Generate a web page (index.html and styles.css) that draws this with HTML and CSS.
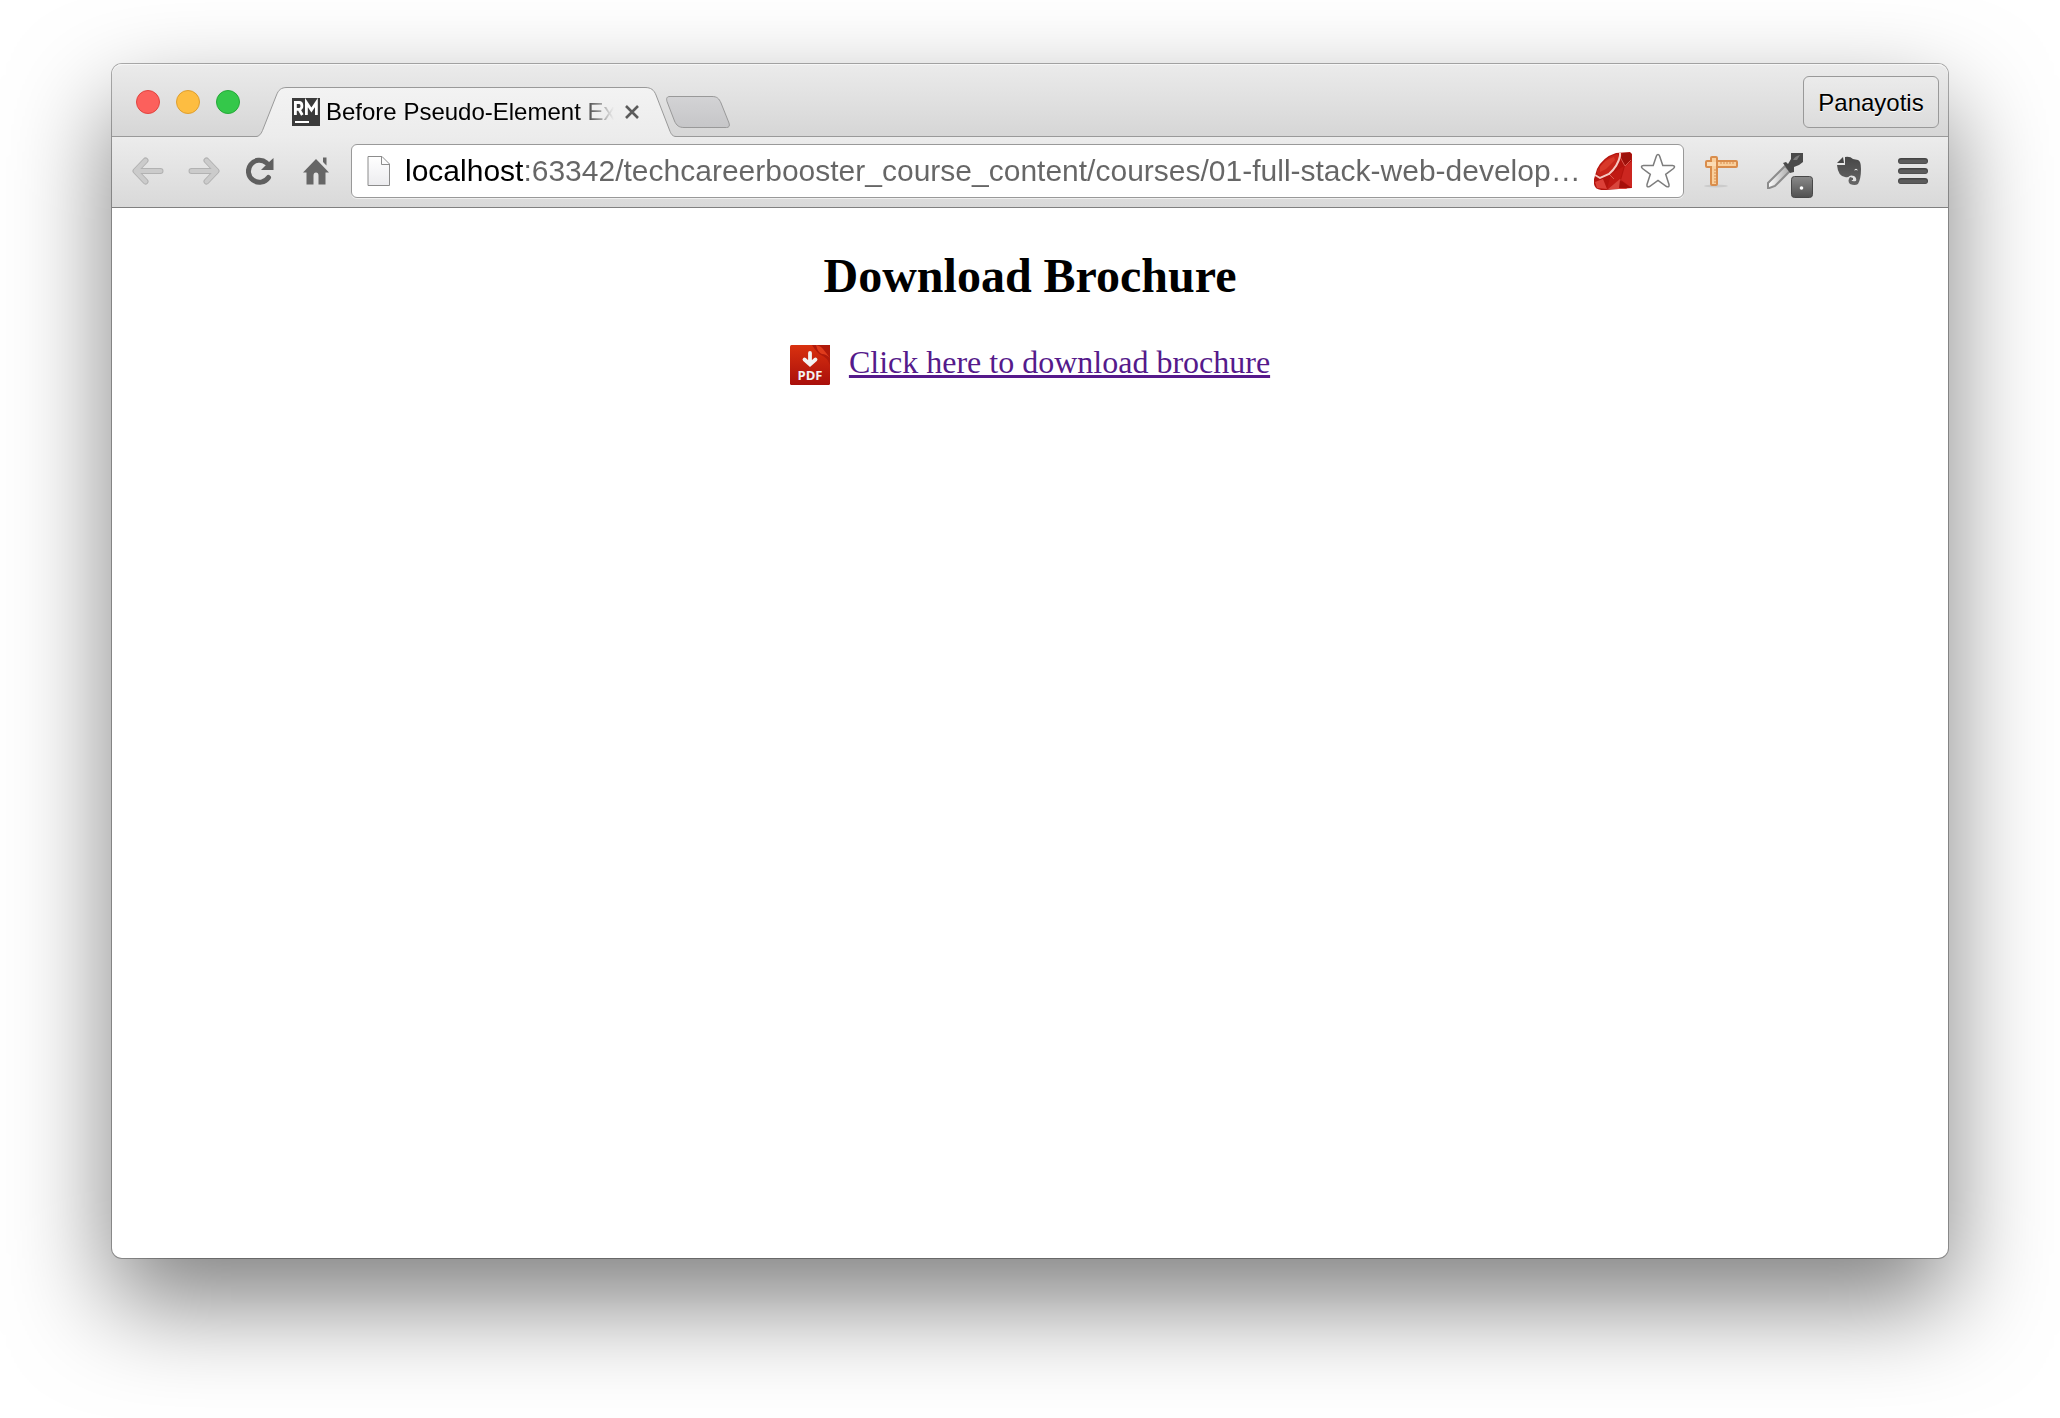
FILE: index.html
```html
<!DOCTYPE html>
<html lang="en">
<head>
<meta charset="utf-8">
<title>Before Pseudo-Element Example</title>
<link rel="stylesheet" href="styles.css">
</head>
<body>
<div class="window">
  <header class="tabstrip">
    <div class="lights">
      <button class="light light-close" aria-label="Close window"></button>
      <button class="light light-min" aria-label="Minimize window"></button>
      <button class="light light-zoom" aria-label="Zoom window"></button>
    </div>
    <div class="tab">
      <svg class="tab-shape" viewBox="0 0 420 51" aria-hidden="true">
        <defs><linearGradient id="tabFill" x1="0" y1="0" x2="0" y2="1"><stop offset="0" stop-color="#f3f3f3"/><stop offset="1" stop-color="#ececec"/></linearGradient></defs>
        <path d="M0 49.500C3 49.500 5 47 6.500 43.500L20.500 8C22.500 3 25 .5 31 .5H389C395 .5 398 3 400 8L413.500 43C415 47 416.500 49.500 420 49.500V51H0Z" fill="url(#tabFill)"/>
        <path d="M0 49.500C3 49.500 5 47 6.500 43.500L20.500 8C22.500 3 25 .5 31 .5H389C395 .5 398 3 400 8L413.500 43C415 47 416.500 49.500 420 49.500" fill="none" stroke="#999"/>
      </svg>
      <svg class="favicon" viewBox="0 0 28 28" aria-hidden="true">
        <rect width="28" height="28" fill="#3b3b3b"/>
        <path d="M3.400 17V4.500H7.200C10.800 4.500 10.800 11.300 7.200 11.300H3.500M7 11.300L10.300 17M14.400 17V4.500L19.400 12L24.400 4.500V17" fill="none" stroke="#fff" stroke-width="2.800"/>
        <rect x="3" y="23" width="14" height="2" fill="#fff"/>
      </svg>
      <span class="tab-title">Before Pseudo-Element Example</span>
      <button class="tab-close" aria-label="Close tab">
        <svg width="14" height="14" viewBox="0 0 14 14"><path d="M1 1L13 13M13 1L1 13" stroke="#5b5b5b" stroke-width="2.600"/></svg>
      </button>
    </div>
    <button class="new-tab" aria-label="New tab">
      <svg width="66" height="34" viewBox="0 0 66 34">
        <defs><linearGradient id="newFill" x1="0" y1="0" x2="0" y2="1"><stop offset="0" stop-color="#d3d3d5"/><stop offset="1" stop-color="#c6c6c8"/></linearGradient></defs>
        <path d="M5 1.500H47C52 1.500 54 3.500 56 8L64 28C65 31 64 32.500 61.500 32.500H19C14 32.500 11.500 30.500 9.500 26L2 6.500C1 3 2 1.500 5 1.500Z" fill="url(#newFill)" stroke="#999"/>
      </svg>
    </button>
    <button class="profile">Panayotis</button>
  </header>

  <nav class="toolbar" aria-label="Navigation">
    <button class="nav-btn" aria-label="Back">
      <svg width="32" height="28" viewBox="0 0 32 28"><g fill="none" stroke-linecap="round" stroke-linejoin="round"><path d="M13.500 3.500L3.500 14L13.500 24.500M4 14H28.500" stroke="#b2b2b2" stroke-width="6"/><path d="M13.500 3.500L3.500 14L13.500 24.500M4 14H28.500" stroke="#cbcbcb" stroke-width="4"/></g></svg>
    </button>
    <button class="nav-btn" aria-label="Forward">
      <svg width="32" height="28" viewBox="0 0 32 28"><g fill="none" stroke-linecap="round" stroke-linejoin="round"><path d="M18.500 3.500L28.500 14L18.500 24.500M28 14H3.500" stroke="#b2b2b2" stroke-width="6"/><path d="M18.500 3.500L28.500 14L18.500 24.500M28 14H3.500" stroke="#cbcbcb" stroke-width="4"/></g></svg>
    </button>
    <button class="nav-btn" aria-label="Reload">
      <svg width="28" height="28" viewBox="0 0 28 28"><path d="M22.500 20.500A11 11 0 1 1 20.500 5.800" fill="none" stroke="#5f5f5f" stroke-width="5" stroke-linecap="round"/><path d="M27.500 1V13H15L19.500 8.500L22.500 5.500Z" fill="#5f5f5f"/></svg>
    </button>
    <button class="nav-btn" aria-label="Home">
      <svg width="26" height="28" viewBox="0 0 26 28"><path d="M13 2L26 15.500H22.500V27.500H15.500V18.500Q15.500 15.500 13 15.500T10.500 18.500V27.500H3.500V15.500H0ZM20 .5H23.500V8.500L20 5Z" fill="#666"/></svg>
    </button>
    <div class="omnibox">
      <svg class="page-icon" width="24" height="32" viewBox="0 0 24 32" aria-hidden="true">
        <defs><linearGradient id="pageFill" x1="0" y1="0" x2="0" y2="1"><stop offset="0" stop-color="#fff"/><stop offset="1" stop-color="#ececef"/></linearGradient></defs>
        <path d="M1 1.500H15L22.500 9V30.500H1Z" fill="url(#pageFill)" stroke="#8c8c8c"/><path d="M14.500 1.500V9.500H22.500" fill="none" stroke="#8c8c8c"/>
      </svg>
      <input class="url" type="text" aria-label="Address" value="localhost:63342/techcareerbooster_course_content/courses/01-full-stack-web-develop…">
      <svg class="ruby" width="38" height="38" viewBox="0 0 38 38" aria-hidden="true">
        <path d="M0 27L3 17Q9 5 22 1L36 0L38 2V36L12 38Q1 39 0 32Z" fill="#b3140e"/>
        <path d="M3 19Q10 5 23 2L26 4Q23 13 15 21L7 24Q2 23 3 19Z" fill="#c9251a"/>
        <path d="M6 15Q12 7 20 5L21 8L12 17L6 20Z" fill="#d8392a"/>
        <path d="M29 1H37V9L31 14L27 6Z" fill="#9d110b"/>
        <path d="M31 14L38 9V36L27 28Z" fill="#cc2620"/>
        <path d="M17 22L30 14L26 28L13 37Z" fill="#c01913"/>
        <path d="M14 37L26 27L33 37Z" fill="#d9453c"/>
        <path d="M26 28L37 36H25Z" fill="#a60f0a"/>
        <path d="M1 30L9 27L13 37L3 36Z" fill="#dc4038"/>
        <path d="M26 5L31 14L37 8M15 22L20 27" fill="none" stroke="#d9584e"/>
        <path d="M1 23L6 26L15 22Q24 14 26 4V1" fill="none" stroke="#f7c9c2" stroke-width="2"/>
      </svg>
      <button class="star" aria-label="Bookmark this page">
        <svg width="36" height="36" viewBox="0 0 36 36"><path d="M18 1.500Q19 1.500 19.600 3L22.800 12.500H32.500Q36 13 33.500 15.500L25.700 21.300L29 31.500Q29.500 34.800 26.500 33.500L18 27.500L9.500 33.500Q6.500 34.800 7 31.500L10.300 21.300L2.500 15.500Q0 13 3.500 12.500H13.200L16.400 3Q17 1.500 18 1.500Z" fill="#fff" stroke="#7d7d7d" stroke-width="1.500"/></svg>
      </button>
    </div>
    <div class="extensions">
      <button class="ext-btn" aria-label="Page ruler">
        <svg width="34" height="34" viewBox="0 0 34 34"><ellipse cx="12" cy="32" rx="12" ry="1.500" fill="#cbcbcb"/><rect x="2" y="7" width="31" height="6" rx="1" fill="#f9cf9c" stroke="#d98d4c" stroke-width="2"/><rect x="7" y="3" width="6" height="28" rx="1" fill="#f9cf9c" stroke="#d98d4c" stroke-width="2"/><path d="M17 7V10M20 7V10M23 7V10M26 7V10M29 7V10M10 16H13M10 19H13M10 22H13M10 25H13M10 28H13" stroke="#d98d4c"/><path d="M3 8H12V12H3Z" fill="#fbdcb5"/></svg>
      </button>
      <button class="ext-btn" aria-label="Color picker">
        <svg width="36" height="36" viewBox="0 0 36 36"><defs><linearGradient id="glass"><stop offset="0" stop-color="#fff"/><stop offset="1" stop-color="#a8a8a8"/></linearGradient></defs><path d="M1 30L18 13L23 18L8 33L1 35.500Z" fill="url(#glass)" stroke="#8c8c8c" stroke-width="2"/><path d="M16 10L19 9L21 11L24 6V0H36V9L32 12L27 14V19L23 20Z" fill="#4a4a4a"/><path d="M26 7Q28 3 33 2L30 7Z" fill="#7c7c7c"/></svg>
        <svg class="badge" width="22" height="22" viewBox="0 0 22 22"><defs><linearGradient id="badgeFill" x1="0" y1="0" x2="0" y2="1"><stop offset="0" stop-color="#8a8a8a"/><stop offset="1" stop-color="#505050"/></linearGradient></defs><rect x=".5" y=".5" width="21" height="21" rx="3" fill="url(#badgeFill)" stroke="#484848"/><circle cx="10.500" cy="12" r="1.800" fill="#fff"/></svg>
      </button>
      <button class="ext-btn" aria-label="Evernote">
        <svg width="26" height="30" viewBox="0 0 26 30"><defs><linearGradient id="hide" x1="0" y1="0" x2="0" y2="1"><stop offset="0" stop-color="#464646"/><stop offset="1" stop-color="#666"/></linearGradient></defs><path d="M7 1L8 7H1Z" fill="#454545"/><path d="M9 1Q14 0 17 3L22 4Q25 5 25 13Q25 23 22 28Q19 30 14 28Q11 25 14 21L17 22V24H15.500Q16 26 20 25Q21 22 18 20Q15 19 13.500 20Q12 22 9 21Q2 20 1 9H9Z" fill="url(#hide)"/><path d="M18 14.500Q20 11 22 14.500Q20 13.500 18 14.500Z" fill="#e5e5e5"/></svg>
      </button>
      <button class="ext-btn" aria-label="Menu">
        <svg width="30" height="28" viewBox="0 0 30 28"><path d="M3 4H27M3 14H27M3 24H27" stroke="#454545" stroke-width="6" stroke-linecap="round"/><path d="M3 4.500H27M3 14.500H27M3 24.500H27" stroke="#5c5c5c" stroke-width="4" stroke-linecap="round"/></svg>
      </button>
    </div>
  </nav>

  <main class="page">
    <h2 class="heading">Download Brochure</h2>
    <p class="download">
      <svg class="pdf" viewBox="0 0 40 40" aria-hidden="true">
        <defs><linearGradient id="pdfFill" x1="0" y1="0" x2="0" y2="1"><stop offset="0" stop-color="#d9310f"/><stop offset="1" stop-color="#a90f0b"/></linearGradient></defs>
        <rect width="40" height="40" rx="1.500" fill="url(#pdfFill)"/>
        <path d="M22 0H40V20Q37 12 31 10Q27 8 22 0Z" fill="#b01a0b"/>
        <path d="M26 0Q28 8 32 9Q36 9 40 13L33 4Q31 1 26 0Z" fill="#df3b1c"/>
        <path d="M20 8V19M14.500 14.500L20 19.500L25.500 14.500" fill="none" stroke="#f3f3f3" stroke-width="3.800" stroke-linecap="round"/>
        <text class="pdf-label" x="20" y="35" text-anchor="middle">PDF</text>
      </svg>
      <a class="download-link" href="#brochure">Click here to download brochure</a>
    </p>
  </main>
</div>
</body>
</html>
```
FILE: styles.css
```css
* { box-sizing: border-box; }

body {
  margin: 0;
  min-height: 100vh;
  padding: 63px 111px 159px;
  display: flex;
  background: #fff;
  font-family: "Liberation Sans", Arial, sans-serif;
}

button {
  padding: 0;
  border: 0;
  background: none;
  font: inherit;
  display: flex;
  align-items: center;
  justify-content: center;
}

.window {
  flex: 1;
  min-width: 0;
  display: flex;
  flex-direction: column;
  border: 1px solid rgba(0, 0, 0, .3);
  border-radius: 11px;
  background: #fff;
  background-clip: padding-box;
  box-shadow: 0 44px 100px rgba(0, 0, 0, .5);
}

.tabstrip {
  height: 73px;
  display: flex;
  align-items: flex-end;
  padding: 0 9px 0 24px;
  border-bottom: 1px solid #999;
  border-radius: 10px 10px 0 0;
  background: linear-gradient(#ebebeb, #d6d6d6);
  box-shadow: inset 0 1px #f6f6f6;
}

.lights {
  display: flex;
  gap: 16px;
  margin-right: 16px;
  padding-bottom: 22px;
}

.light {
  width: 24px;
  height: 24px;
  border-radius: 50%;
}

.light-close { background: #fc605c; border: 1px solid #e1443f; }
.light-min { background: #fdbd41; border: 1px solid #df9f2f; }
.light-zoom { background: #34c84a; border: 1px solid #25a938; }

.tab {
  position: relative;
  width: 420px;
  height: 50px;
  margin-bottom: -1px;
  padding: 0 37px 0 36px;
  display: flex;
  align-items: center;
}

.tab-shape {
  position: absolute;
  inset: 0;
  width: 420px;
  height: 51px;
}

.favicon {
  position: relative;
  width: 28px;
  height: 28px;
  flex: none;
  margin-right: 6px;
}

.tab-title {
  position: relative;
  flex: 1;
  overflow: hidden;
  white-space: nowrap;
  font-size: 24px;
  line-height: 32px;
  -webkit-mask-image: linear-gradient(90deg, #000 250px, transparent 288px);
  mask-image: linear-gradient(90deg, #000 250px, transparent 288px);
}

.tab-close {
  position: relative;
  width: 14px;
  height: 32px;
  margin-left: 10px;
}

.new-tab {
  margin: 0 auto 7px -11px;
}

.profile {
  width: 136px;
  height: 52px;
  margin-bottom: 8px;
  padding-top: 2px;
  border: 1px solid #999;
  border-radius: 6px;
  background: linear-gradient(#ebebeb, #dcdcdc);
  color: #000;
  font-size: 24px;
  text-shadow: 0 1px #fff;
}

.toolbar {
  height: 71px;
  display: flex;
  align-items: center;
  padding: 0 3px 2px 8px;
  border-bottom: 1px solid #808080;
  background: linear-gradient(#ececec, #d9d9d9);
}

.nav-btn {
  width: 56px;
  height: 54px;
}

.omnibox {
  flex: 1;
  min-width: 0;
  height: 54px;
  margin: 0 5px 0 7px;
  padding: 0 7px 0 15px;
  display: flex;
  align-items: center;
  border: 1px solid #999;
  border-radius: 6px;
  background: #fff;
  box-shadow: 0 1px #efefef;
}

.page-icon {
  flex: none;
  margin-right: 14px;
}

.url {
  flex: 1;
  min-width: 0;
  height: 40px;
  padding: 0;
  border: 0;
  outline: 0;
  font: 30px "Liberation Sans", Arial, sans-serif;
  color: transparent;
  background: linear-gradient(90deg, #000 119px, #666 119px);
  -webkit-background-clip: text;
  background-clip: text;
}

.ruby {
  flex: none;
  margin-right: 8px;
}

.extensions { display: flex; }

.ext-btn {
  position: relative;
  width: 64px;
  height: 54px;
}

.badge {
  position: absolute;
  right: 4px;
  bottom: 0;
}

.page {
  flex: 1;
  padding: 40px 16px;
  font-family: "Liberation Serif", "Times New Roman", serif;
  text-align: center;
}

.heading {
  margin: 0 0 40px;
  font-size: 48px;
  line-height: 56px;
}

.download {
  margin: 0;
  display: flex;
  align-items: flex-end;
  justify-content: center;
  gap: 19px;
  font-size: 32px;
  line-height: 36px;
}

.pdf {
  width: 40px;
  height: 40px;
}

.pdf-label {
  fill: #f3f3f3;
  font: bold 13px "Open Sans", sans-serif;
}

.download-link {
  padding-bottom: 5px;
  color: #551a8b;
}
```
